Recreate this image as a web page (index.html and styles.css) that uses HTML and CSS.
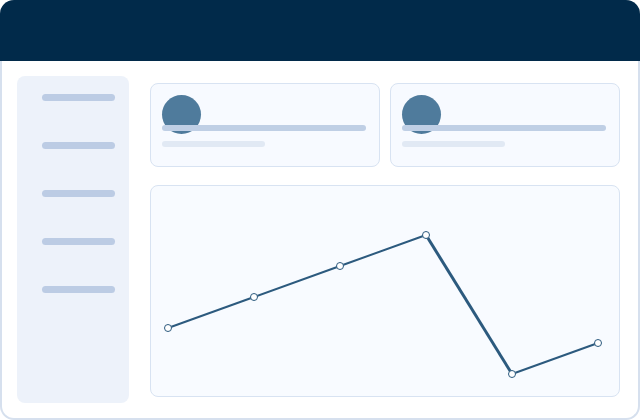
FILE: index.html
```html
<!DOCTYPE html>
<html lang="en">
<head>
  <meta charset="UTF-8">
  <meta name="viewport" content="width=device-width, initial-scale=1.0">
  <title>Dashboard</title>
  <link rel="stylesheet" href="styles.css">
</head>
<body>
  <div class="frame">
    <div class="topbar"></div>
    <div class="panel">
      <div class="sidebar">
        <span class="nav-bar"></span>
        <span class="nav-bar"></span>
        <span class="nav-bar"></span>
        <span class="nav-bar"></span>
        <span class="nav-bar"></span>
      </div>
      <div class="main">
        <div class="stats">
          <div class="stat-card">
            <div class="avatar"></div>
            <div class="line-long"></div>
            <div class="line-short"></div>
          </div>
          <div class="stat-card">
            <div class="avatar"></div>
            <div class="line-long"></div>
            <div class="line-short"></div>
          </div>
        </div>
        <div class="chart-card">
          <svg class="chart" width="470" height="212" viewBox="0 0 470 212">
            <polyline points="18,143 104,112 190,81 276,50" class="trend"/>
            <line x1="276" y1="50" x2="362" y2="189" class="trend steep"/>
            <line x1="362" y1="189" x2="448" y2="158" class="trend"/>
            <circle cx="18" cy="143" r="3.5" class="dot"/>
            <circle cx="104" cy="112" r="3.5" class="dot"/>
            <circle cx="190" cy="81" r="3.5" class="dot"/>
            <circle cx="276" cy="50" r="3.5" class="dot"/>
            <circle cx="362" cy="189" r="3.5" class="dot"/>
            <circle cx="448" cy="158" r="3.5" class="dot"/>
          </svg>
        </div>
      </div>
    </div>
  </div>
</body>
</html>
```

FILE: styles.css
```css
*{
  padding: 0;
  margin: 0;
  box-sizing: border-box;
}
body{
  background: #fff;
  width: 640px;
  height: 420px;
  overflow: hidden;
}

.frame{
  width: 640px;
  height: 420px;
}
.topbar{
  height: 61px;
  background: #012a4a;
  border-radius: 14px 14px 0 0;
}
.panel{
  height: 359px;
  border: 2px solid #d6e0ee;
  border-top: none;
  border-radius: 0 0 14px 14px;
  background: #fff;
  display: flex;
  gap: 21px;
  padding: 15px 0 15px 15px;
}

.sidebar{
  width: 112px;
  height: 327px;
  background: #edf2fa;
  border-radius: 8px;
  display: flex;
  flex-direction: column;
  gap: 41px;
  padding: 18px 0 0 25px;
}
.nav-bar{
  display: block;
  width: 73px;
  height: 7px;
  border-radius: 4px;
  background: #bccce4;
}

.main{
  width: 470px;
  margin-top: 7px;
  display: flex;
  flex-direction: column;
  gap: 18px;
}
.stats{
  display: flex;
  gap: 10px;
}
.stat-card{
  width: 230px;
  height: 84px;
  background: #f7faff;
  border: 1px solid #d8e3f2;
  border-radius: 8px;
  padding: 11px 13px 0 11px;
}
.avatar{
  width: 39px;
  height: 39px;
  border-radius: 50%;
  background: #4f7b9c;
}
.line-long{
  position: relative;
  margin-top: -9px;
  height: 6px;
  border-radius: 3px;
  background: #bfcfe5;
}
.line-short{
  width: 103px;
  height: 6px;
  margin-top: 10px;
  border-radius: 3px;
  background: #e1e9f4;
}

.chart-card{
  width: 470px;
  height: 212px;
  background: #f8fbff;
  border: 1px solid #d8e3f2;
  border-radius: 8px;
  overflow: hidden;
}
.chart{
  display: block;
  margin: -1px;
}
.trend{
  fill: none;
  stroke: #2c5a7e;
  stroke-width: 2;
}
.trend.steep{
  stroke-width: 3;
}
.dot{
  fill: #fff;
  stroke: #2c5a7e;
  stroke-width: 1;
}
```
